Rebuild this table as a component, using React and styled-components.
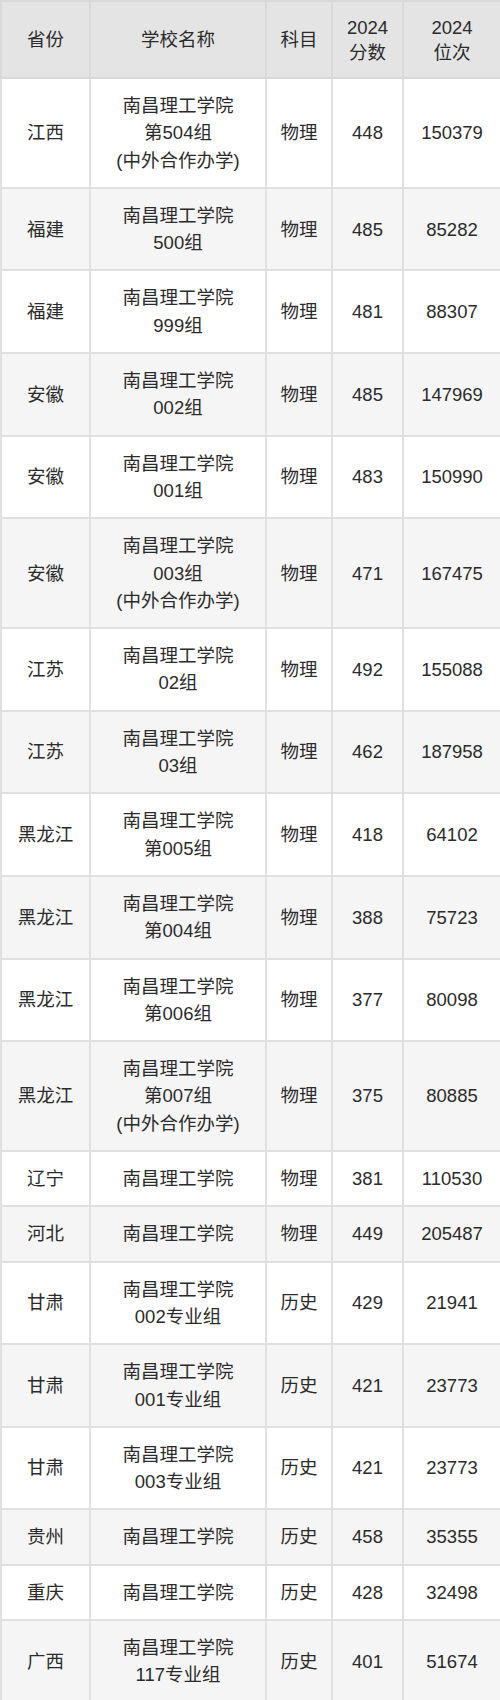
import React from 'react';
import styled, { createGlobalStyle } from 'styled-components';

const GlobalStyle = createGlobalStyle`
  html, body {
    margin: 0;
    padding: 0;
    background: #ffffff;
  }
  body {
    font-family: "Liberation Sans", "Noto Sans CJK SC", sans-serif;
    color: #2b2b2b;
  }
`;

const rows = [
  ['江西', ['南昌理工学院', '第504组', '(中外合作办学)'], '物理', '448', '150379'],
  ['福建', ['南昌理工学院', '500组'], '物理', '485', '85282'],
  ['福建', ['南昌理工学院', '999组'], '物理', '481', '88307'],
  ['安徽', ['南昌理工学院', '002组'], '物理', '485', '147969'],
  ['安徽', ['南昌理工学院', '001组'], '物理', '483', '150990'],
  ['安徽', ['南昌理工学院', '003组', '(中外合作办学)'], '物理', '471', '167475'],
  ['江苏', ['南昌理工学院', '02组'], '物理', '492', '155088'],
  ['江苏', ['南昌理工学院', '03组'], '物理', '462', '187958'],
  ['黑龙江', ['南昌理工学院', '第005组'], '物理', '418', '64102'],
  ['黑龙江', ['南昌理工学院', '第004组'], '物理', '388', '75723'],
  ['黑龙江', ['南昌理工学院', '第006组'], '物理', '377', '80098'],
  ['黑龙江', ['南昌理工学院', '第007组', '(中外合作办学)'], '物理', '375', '80885'],
  ['辽宁', ['南昌理工学院'], '物理', '381', '110530'],
  ['河北', ['南昌理工学院'], '物理', '449', '205487'],
  ['甘肃', ['南昌理工学院', '002专业组'], '历史', '429', '21941'],
  ['甘肃', ['南昌理工学院', '001专业组'], '历史', '421', '23773'],
  ['甘肃', ['南昌理工学院', '003专业组'], '历史', '421', '23773'],
  ['贵州', ['南昌理工学院'], '历史', '458', '35355'],
  ['重庆', ['南昌理工学院'], '历史', '428', '32498'],
  ['广西', ['南昌理工学院', '117专业组'], '历史', '401', '51674'],
];

const Table = styled.table`
  width: 500px;
  table-layout: fixed;
  border-collapse: collapse;
  font-size: 18.5px;
`;

const HeadCell = styled.th`
  background: #e4e4e4;
  font-weight: normal;
  line-height: 25px;
  padding: 12px 2px;
  height: 51px;
  border: 2px solid #d9d9d9;
  text-align: center;
  vertical-align: middle;
`;

const Row = styled.tr`
  background: ${(p) => (p.$striped ? '#f5f5f5' : '#ffffff')};
`;

const Cell = styled.td`
  line-height: 27.3px;
  padding: 13px 2px;
  border: 2px solid #e0e0e0;
  text-align: center;
  vertical-align: middle;
`;

const Line = styled.div`
  white-space: nowrap;
`;

export default function App() {
  return (
    <>
      <GlobalStyle />
      <Table>
        <colgroup>
          <col style={{ width: 89 }} />
          <col style={{ width: 176 }} />
          <col style={{ width: 66 }} />
          <col style={{ width: 71 }} />
          <col style={{ width: 98 }} />
        </colgroup>
        <thead>
          <tr>
            <HeadCell>省份</HeadCell>
            <HeadCell>学校名称</HeadCell>
            <HeadCell>科目</HeadCell>
            <HeadCell>2024<br />分数</HeadCell>
            <HeadCell>2024<br />位次</HeadCell>
          </tr>
        </thead>
        <tbody>
          {rows.map((r, i) => (
            <Row key={i} $striped={i % 2 === 1}>
              <Cell>{r[0]}</Cell>
              <Cell>
                {r[1].map((l, j) => (
                  <Line key={j}>{l}</Line>
                ))}
              </Cell>
              <Cell>{r[2]}</Cell>
              <Cell>{r[3]}</Cell>
              <Cell>{r[4]}</Cell>
            </Row>
          ))}
        </tbody>
      </Table>
    </>
  );
}
